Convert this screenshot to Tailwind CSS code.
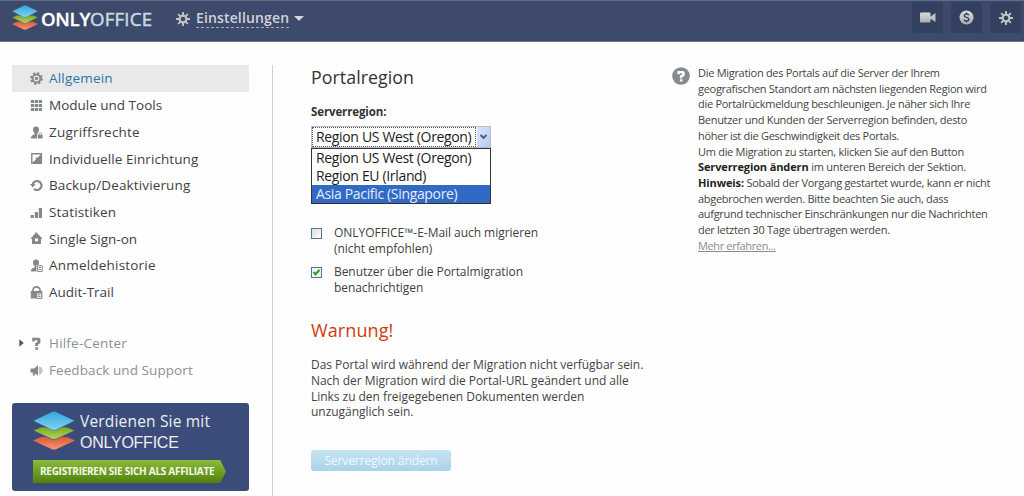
<!DOCTYPE html>
<html lang="de">
<head>
<meta charset="utf-8">
<title>Einstellungen</title>
<script src="https://cdn.jsdelivr.net/npm/@tailwindcss/browser@4"></script>
</head>
<body class="w-[1024px] h-[496px] overflow-hidden bg-[#fefefe] font-['Open_Sans','Noto_Sans',sans-serif] text-[#3f3f3f]">
<svg class="absolute size-0">
  <defs>
    <linearGradient id="blue" x1="0" y1="0" x2="0" y2="1"><stop offset="0" stop-color="#2fa6dc"/><stop offset="1" stop-color="#86d3f2"/></linearGradient>
    <linearGradient id="green" x1="0" y1="0" x2="0" y2="1"><stop offset="0" stop-color="#76ab1c"/><stop offset="1" stop-color="#b3d46c"/></linearGradient>
    <linearGradient id="red" x1="0" y1="0" x2="0" y2="1"><stop offset="0" stop-color="#e0562f"/><stop offset="1" stop-color="#f39a7c"/></linearGradient>
    <linearGradient id="silver" x1="0" y1="0" x2="0" y2="1"><stop offset="0" stop-color="#dcdcdc"/><stop offset="1" stop-color="#a9b0b0"/></linearGradient>
    <symbol id="logo" viewBox="0 0 42 39" preserveAspectRatio="none">
      <path d="M0 29.5 L8 26 L34 26 L42 29.5 L23 38.3 Q21 39.2 19 38.3 Z" fill="url(#red)"/>
      <path d="M0 19.5 L8 16 L34 16 L42 19.5 L23 28.3 Q21 29.2 19 28.3 Z" fill="url(#green)" stroke="#3d4b75" stroke-width=".7"/>
      <path d="M0 9.8 L19 .7 Q21 -.2 23 .7 L42 9.8 L23 19 Q21 20 19 19 Z" fill="url(#blue)" stroke="#3d4b75" stroke-width=".5"/>
    </symbol>
    <symbol id="sun-gear" viewBox="0 0 14 14">
      <circle cx="7" cy="7" r="3.4" fill="none" stroke="#c0c2c4" stroke-width="2.2"/>
      <path d="M7 0v3M7 11v3M0 7h3M11 7h3M2.1 2.1l2.1 2.1M9.8 9.8l2.1 2.1M11.9 2.1l-2.1 2.1M4.2 9.8l-2.1 2.1" stroke="#c0c2c4" stroke-width="1.9"/>
    </symbol>
  </defs>
</svg>

<header class="flex h-[42px] items-start border-t border-b border-t-[#5d6a86] border-b-[#6b7895] bg-[#3d4a6c]">
  <svg class="ml-[12px] mt-[4px] h-[25px] w-[26px]"><use href="#logo"/></svg>
  <div class="ml-[3px] mt-[5px] w-[112px] whitespace-nowrap text-[18.6px] leading-[25px] font-semibold tracking-[-0.6px] text-white"><span class="tracking-[-0.3px] [-webkit-text-stroke:0.3px_#fff]">ONLY</span><span class="font-normal tracking-[0.2px] text-[#c3dbe2] [-webkit-text-stroke:0.5px_#c3dbe2]">OFFICE</span></div>
  <svg class="ml-[23px] mt-[11px] size-[14px]"><use href="#sun-gear"/></svg>
  <div class="ml-[6px] mt-[8px] h-[19px] w-[93px] whitespace-nowrap border-b border-dashed border-[#a4abbc] text-[14px] leading-[18px] font-semibold tracking-[0.14px] text-[#d2d3d6]">Einstellungen</div>
  <svg class="ml-[5px] mt-[15px] h-[5px] w-[10px]" viewBox="0 0 10 5"><path d="M0 0h10L5 5z" fill="#d4d6d9"/></svg>
  <div class="ml-auto mr-[3px] mt-[1px] flex gap-[8px]">
    <div class="flex size-[31px] items-center justify-center rounded-[3px] bg-[#344060]">
      <svg class="h-[11px] w-[16px]" viewBox="0 0 16 11"><rect x="0" y="0.5" width="10.5" height="10" rx="1" fill="url(#silver)"/><path d="M9.8 4.2h1.2L15.5 1v9L11 7H9.8z" fill="#bcc1c2"/></svg>
    </div>
    <div class="flex size-[31px] items-center justify-center rounded-[3px] bg-[#344060]">
      <svg class="size-[15px]" viewBox="0 0 15 15"><circle cx="7.5" cy="7.5" r="7" fill="url(#silver)"/><path d="M9.9 5.2Q9.2 4 7.5 4T5.2 5.6Q5.2 6.9 7.5 7.4T9.9 9.4Q9.8 11 7.5 11T5 9.7M7.5 2.5v1.5M7.5 11v1.5" fill="none" stroke="#344060" stroke-width="1.4"/></svg>
    </div>
    <div class="flex size-[31px] items-center justify-center rounded-[3px] bg-[#344060]">
      <svg class="size-[14px]"><use href="#sun-gear"/></svg>
    </div>
  </div>
</header>

<div class="flex pt-[23px]">
  <aside class="w-[272px] pl-[12px]">
    <nav class="w-[237px] whitespace-nowrap text-[13.5px] tracking-[0.08px] text-[#3f4245]">
      <div class="flex h-[27px] items-center gap-[6px] bg-[#e9e9e9] pl-[18px] text-[#2a78a6]">
        <svg class="size-[13px]" viewBox="0 0 13 13"><circle cx="6.5" cy="6.5" r="5.4" fill="none" stroke="#83888d" stroke-width="2" stroke-dasharray="2.2 2.04"/><circle cx="6.5" cy="6.5" r="3.9" fill="none" stroke="#83888d" stroke-width="2"/><circle cx="6.5" cy="6.5" r="1.7" fill="#83888d"/></svg>
        <span class="tracking-[0.2px]">Allgemein</span></div>
      <div class="flex h-[26.7px] items-center gap-[6px] pl-[18px]">
        <svg class="size-[13px]" viewBox="0 0 13 13" fill="#83888d"><path d="M.8 1h3.3v3H.8zM4.8 1h3.3v3H4.8zM8.8 1h3.3v3H8.8zM.8 5h3.3v3H.8zM4.8 5h3.3v3H4.8zM8.8 5h3.3v3H8.8zM.8 9h3.3v3H.8zM4.8 9h3.3v3H4.8zM8.8 9h3.3v3H8.8z"/></svg>
        <span class="tracking-normal">Module und Tools</span></div>
      <div class="flex h-[26.7px] items-center gap-[6px] pl-[18px]">
        <svg class="size-[13px]" viewBox="0 0 13 13" fill="#83888d"><path d="M3 3.5Q3 .5 6 .5T9 3.5Q9 6 7.5 7V8L7 12.5H.8Q.8 9.5 4.6 8.6V7Q3 6 3 3.5z"/><path d="M8 9h.7V8a1.6 1.6 0 0 1 3.2 0v1h.7v3.6H8zM9.5 9h1.6V8a.8.8 0 0 0-1.6 0z"/></svg>
        <span class="tracking-[0.2px]">Zugriffsrechte</span></div>
      <div class="flex h-[26.7px] items-center gap-[6px] pl-[18px]">
        <svg class="size-[13px]" viewBox="0 0 13 13"><path d="M1.8 1.8h9.6v9.6H1.8z" fill="#fff" stroke="#83888d" stroke-width="1.4"/><path d="M11 2v9H2l3.8-3.4V5.6h2z" fill="#83888d"/></svg>
        <span>Individuelle Einrichtung</span></div>
      <div class="flex h-[26.7px] items-center gap-[6px] pl-[18px]">
        <svg class="size-[13px]" viewBox="0 0 13 13"><path d="M2.6 5.4A4.5 4.5 0 1 1 4 9.9" fill="none" stroke="#83888d" stroke-width="2.2"/><path d="M0 5h5.6L2.8 8.4z" fill="#83888d"/></svg>
        <span class="tracking-[0.14px]">Backup/Deaktivierung</span></div>
      <div class="flex h-[26.7px] items-center gap-[6px] pl-[18px]">
        <svg class="size-[13px]" viewBox="0 0 13 13" fill="#83888d"><path d="M.6 9h3.2v3H.6zM4.8 6H8v6H4.8zM8.8 2H12v10H8.8z"/></svg>
        <span class="tracking-[0.15px]">Statistiken</span></div>
      <div class="flex h-[26.7px] items-center gap-[6px] pl-[18px]">
        <svg class="size-[13px]" viewBox="0 0 13 13" fill="#83888d"><path fill-rule="evenodd" d="M6.5.5L12.6 6.8H11V12H2V6.8H.4L5.6.9V.2h1.6zM5 6.5v2.8h3V6.5z"/></svg>
        <span class="tracking-normal">Single Sign-on</span></div>
      <div class="flex h-[26.7px] items-center gap-[6px] pl-[18px]">
        <svg class="size-[13px]" viewBox="0 0 13 13" fill="#83888d"><path d="M3 3.5Q3 .5 6 .5T9 3.5Q9 5 8.5 6H6.4V12.5H.8Q.8 9.5 4.6 8.6V7Q3 6 3 3.5z"/><path d="M7.4 6.8h4.8v5.6H7.4z" fill="#fff" stroke="#83888d"/><path d="M8.6 8.6h2.4M8.6 10.4h2.4" stroke="#83888d"/></svg>
        <span class="tracking-[0.2px]">Anmeldehistorie</span></div>
      <div class="flex h-[26.7px] items-center gap-[6px] pl-[18px]">
        <svg class="size-[13px]" viewBox="0 0 13 13"><path d="M3 6V4.4a3.5 3.5 0 0 1 7 0V6" fill="none" stroke="#83888d" stroke-width="1.8"/><path d="M.8 5h11.4v7.5H.8z" fill="#83888d"/><path d="M6.8 7h5v5.5h-5z" fill="#fff" stroke="#83888d"/><path d="M8 8.8h2.6M8 10.6h2.6" stroke="#83888d"/></svg>
        <span class="tracking-normal">Audit-Trail</span></div>
      <div class="mt-[24.5px] flex h-[26.7px] items-center pl-[7px] text-[#8c9194]">
        <svg class="mr-[6px] h-[8px] w-[5px]" viewBox="0 0 5 8"><path d="M.3.3L4.8 4L.3 7.7z" fill="#55595c"/></svg>
        <svg class="mr-[6px] size-[13px]" viewBox="0 0 13 13" fill="#83888d"><path d="M2.2.8H9L10.4 2v4L8 7.4V9H5.2V6.2L7.4 5V3.2H4.8v1.2H2.2zM5.2 10.2H8v2.5H5.2z"/></svg>
        <span class="tracking-[0.2px]">Hilfe-Center</span></div>
      <div class="flex h-[26.7px] items-center gap-[6px] pl-[18px] text-[#8c9194]">
        <svg class="size-[13px]" viewBox="0 0 13 13"><path d="M.5 4.5h3.6L8 1.2v10.6L4.8 9.2v2.3H2.8V8.6H.5z" fill="#83888d"/><path d="M8.8 2.5Q12.6 3.2 12.6 6.5T8.8 10.5z" fill="#bfc3c5"/></svg>
        <span>Feedback und Support</span></div>
    </nav>
    <div class="mt-[19.5px] h-[88px] w-[237px] rounded-[3px] bg-[#3c4c7a] pt-[8px] pl-[21px]">
      <div class="flex h-[42px] gap-[5px]">
        <svg class="h-[39px] w-[42px]"><use href="#logo"/></svg>
        <div class="whitespace-nowrap text-[15.5px] leading-[20px] text-[#eceef3]"><div class="tracking-[0.18px]">Verdienen Sie mit</div><div class="pt-[2px] font-['Liberation_Sans',sans-serif] text-[16px] tracking-[-0.25px]">ONLYOFFICE</div></div>
      </div>
      <div class="mt-[7px] flex h-[23px] w-[193px] items-center whitespace-nowrap bg-linear-to-b from-[#8dbb3a] to-[#4f8109] pl-[7px] text-[10px] font-bold tracking-[-0.28px] text-[#f2f7e8] [clip-path:polygon(0_0,97%_0,100%_50%,97%_100%,0_100%)]"><span>REGISTRIEREN SIE SICH ALS AFFILIATE</span></div>
    </div>
  </aside>

  <main class="h-[440px] w-[400px] border-l border-[#cfcfcf] pl-[38px]">
    <h1 class="text-[17.8px] leading-[24px] tracking-[0.06px] text-[#333]"><span>Portalregion</span></h1>
    <div class="mt-[15px] text-[11.5px] leading-[16px] font-bold tracking-[-0.12px] text-[#333]"><span>Serverregion:</span></div>
    <div class="relative mt-[6px] h-[22px] w-[180px] border border-[#b9bcc0] bg-white text-[14px] tracking-[-0.34px] text-[#1c1c1c]">
      <div class="flex h-[20px] justify-between">
        <div class="w-[164px] border border-dotted border-[#555] pl-[3px] leading-[18px] whitespace-nowrap"><span>Region US West (Oregon)</span></div>
        <div class="flex w-[13px] items-center justify-center bg-linear-to-br from-[#dbe6fd] to-[#b4c9f6]"><svg class="h-[6px] w-[7px]" viewBox="0 0 7 6"><path d="M.5 1l3 3 3-3" fill="none" stroke="#46597f" stroke-width="1.9"/></svg></div>
      </div>
      <div class="absolute top-[21px] -left-px w-[180px] border border-[#333] bg-white leading-[18px] whitespace-nowrap">
        <div class="pl-[4px]"><span>Region US West (Oregon)</span></div>
        <div class="pl-[4px]"><span>Region EU (Irland)</span></div>
        <div class="bg-[#316ac5] pl-[4px] text-[#e6edf8]"><span>Asia Pacific (Singapore)</span></div>
      </div>
    </div>
    <div class="mt-[77px] flex gap-[12px] text-[12px] leading-[15.6px] tracking-[-0.04px]">
      <span class="mt-[3px] size-[11px] border border-[#4a76a0] bg-linear-to-br from-[#dcdcd7] to-white"></span>
      <div class="whitespace-nowrap"><div><span>ONLYOFFICE™-E-Mail auch migrieren</span></div><div><span>(nicht empfohlen)</span></div></div>
    </div>
    <div class="mt-[8px] flex gap-[12px] text-[12px] leading-[15.6px] tracking-[-0.06px]">
      <span class="mt-[3px] size-[11px] border border-[#4a76a0] bg-[#f4f4f1]"><svg class="size-[9px]" viewBox="0 0 9 9"><path d="M1.5 4l2 2.3L7.5 2" fill="none" stroke="#21a121" stroke-width="2"/></svg></span>
      <div class="whitespace-nowrap"><div><span>Benutzer über die Portalmigration</span></div><div><span>benachrichtigen</span></div></div>
    </div>
    <h2 class="mt-[23px] text-[18px] leading-[24px] tracking-[0.1px] text-[#d03a10]"><span>Warnung!</span></h2>
    <div class="mt-[15px] text-[12px] leading-[15.6px] tracking-[-0.04px] whitespace-nowrap text-[#444]">
      <div><span>Das Portal wird während der Migration nicht verfügbar sein.</span></div>
      <div><span>Nach der Migration wird die Portal-URL geändert und alle</span></div>
      <div><span>Links zu den freigegebenen Dokumenten werden</span></div>
      <div><span>unzugänglich sein.</span></div>
    </div>
    <div class="mt-[30px] flex h-[21px] w-[140px] items-center justify-center rounded-[3px] bg-linear-to-b from-[#c6e4f2] to-[#a9d3ea] pt-[1px] text-[12px] tracking-[-0.1px] text-[#f2f9fc]"><span>Serverregion ändern</span></div>
  </main>

  <section class="flex pt-[2px] text-[11px] leading-[15.7px] tracking-[-0.29px] whitespace-nowrap text-[#444]">
    <svg class="mr-[8px] size-[18px]" viewBox="0 0 18 18"><circle cx="9" cy="9" r="8.8" fill="#868b8f"/><path d="M5.4 4h6L12.7 5.2v3.6L10.4 10v1.2H7.9V8.6L10 7.6V6.2H7.8v1.1H5.4zM7.9 12.2h2.5v2.3H7.9z" fill="#fff"/></svg>
    <div class="-mt-[2px]">
      <div><span>Die Migration des Portals auf die Server der Ihrem</span></div>
      <div><span>geografischen Standort am nächsten liegenden Region wird</span></div>
      <div><span>die Portalrückmeldung beschleunigen. Je näher sich Ihre</span></div>
      <div><span>Benutzer und Kunden der Serverregion befinden, desto</span></div>
      <div><span>höher ist die Geschwindigkeit des Portals.</span></div>
      <div><span>Um die Migration zu starten, klicken Sie auf den Button</span></div>
      <div><b class="tracking-[-0.12px] text-[#222]">Serverregion ändern</b><span class="tracking-[-0.25px]"> im unteren Bereich der Sektion.</span></div>
      <div><b class="tracking-[-0.12px] text-[#222]">Hinweis:</b><span> Sobald der Vorgang gestartet wurde, kann er nicht</span></div>
      <div><span>abgebrochen werden. Bitte beachten Sie auch, dass</span></div>
      <div><span>aufgrund technischer Einschränkungen nur die Nachrichten</span></div>
      <div><span>der letzten 30 Tage übertragen werden.</span></div>
      <div><span class="tracking-[-0.37px] text-[#8c8c8c] underline">Mehr erfahren...</span></div>
    </div>
  </section>
</div>
</body>
</html>
